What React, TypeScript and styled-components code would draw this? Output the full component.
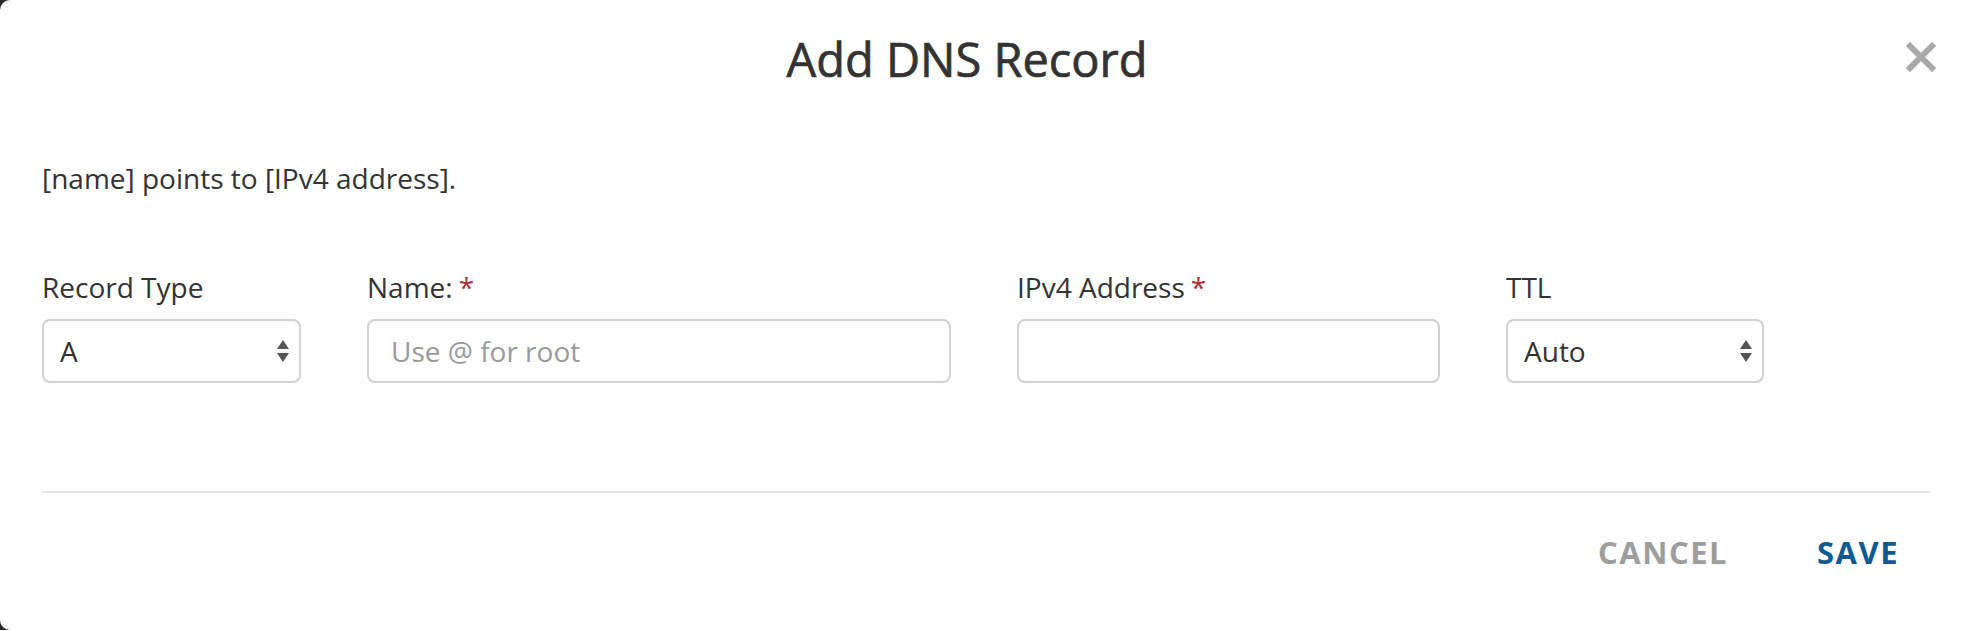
import styled, { createGlobalStyle } from "styled-components";

const GlobalStyle = createGlobalStyle`
  html, body {
    margin: 0;
    padding: 0;
    background: #2a2a2a;
    overflow: hidden;
  }
  body {
    font-family: "Open Sans", "Liberation Sans", sans-serif;
    color: #333;
  }
`;

const Modal = styled.div`
  position: relative;
  box-sizing: border-box;
  width: 1972px;
  height: 630px;
  background: #fff;
  border-radius: 10px;
  padding: 0 42px;
`;

const Header = styled.div`
  display: flex;
  justify-content: center;
  padding: 30px 38px 0 0;
`;

const Title = styled.h1`
  margin: 0;
  font-size: 47px;
  line-height: 58px;
  font-weight: 400;
  color: #333;
  -webkit-text-stroke: 0.7px #333;
`;

const CloseButton = styled.button`
  position: absolute;
  top: 42px;
  right: 36px;
  width: 30px;
  height: 30px;
  padding: 0;
  border: none;
  background: none;
  cursor: pointer;
`;

const Description = styled.p`
  margin: 70px 0 0;
  font-size: 28px;
  line-height: 40px;
`;

const FieldRow = styled.div`
  display: grid;
  grid-template-columns: 259px 584px 423px 258px;
  column-gap: 66px;
  margin-top: 69px;
`;

const Field = styled.div`
  display: flex;
  flex-direction: column;
  gap: 12px;
`;

const Label = styled.label`
  font-size: 28px;
  line-height: 40px;
  color: #333;
`;

const Required = styled.span`
  color: #a83232;
  margin-left: 6px;
`;

const controlBase = `
  box-sizing: border-box;
  width: 100%;
  height: 64px;
  border: 2px solid #d2d2d2;
  border-radius: 8px;
  background: #fff;
  font-family: "Open Sans", "Liberation Sans", sans-serif;
  font-size: 28px;
  color: #333;
  outline: none;
`;

const TextInput = styled.input`
  ${controlBase}
  padding: 0 22px;
  &::placeholder {
    color: #9a9a9a;
  }
`;

const SelectWrap = styled.div`
  position: relative;
`;

const Select = styled.select`
  ${controlBase}
  appearance: none;
  -webkit-appearance: none;
  padding: 0 40px 0 16px;
`;

const Arrows = styled.svg`
  position: absolute;
  right: 12px;
  top: 21px;
  pointer-events: none;
`;

const Divider = styled.hr`
  margin: 108px 0 0;
  border: none;
  border-top: 2px solid #e3e6ea;
`;

const Footer = styled.div`
  display: flex;
  justify-content: flex-end;
  gap: 27px;
  padding-top: 38px;
`;

const ActionButton = styled.button<{ $primary?: boolean }>`
  border: none;
  background: none;
  padding: 0 31px;
  font-family: "Open Sans", "Liberation Sans", sans-serif;
  font-size: 31px;
  line-height: 42px;
  font-weight: 700;
  letter-spacing: 1.5px;
  text-transform: uppercase;
  color: ${({ $primary }) => ($primary ? "#0f5b91" : "#9d9d9d")};
  cursor: pointer;
`;

const SelectArrows = () => (
  <Arrows width="12" height="22" viewBox="0 0 12 22">
    <path d="M6 0 L12 9 L0 9 Z" fill="#555" />
    <path d="M0 13 L12 13 L6 22 Z" fill="#555" />
  </Arrows>
);

export default function App() {
  return (
    <>
      <GlobalStyle />
      <Modal>
        <Header>
          <Title>Add DNS Record</Title>
        </Header>
        <CloseButton aria-label="Close">
          <svg width="30" height="30" viewBox="0 0 30 30">
            <path
              d="M4 4 L26 26 M26 4 L4 26"
              stroke="#a9a9a9"
              strokeWidth="6"
              strokeLinecap="square"
            />
          </svg>
        </CloseButton>

        <Description>[name] points to [IPv4 address].</Description>

        <FieldRow>
          <Field>
            <Label>Record Type</Label>
            <SelectWrap>
              <Select defaultValue="A">
                <option value="A">A</option>
                <option value="AAAA">AAAA</option>
                <option value="CNAME">CNAME</option>
                <option value="MX">MX</option>
                <option value="TXT">TXT</option>
              </Select>
              <SelectArrows />
            </SelectWrap>
          </Field>
          <Field>
            <Label>
              Name:<Required>*</Required>
            </Label>
            <TextInput placeholder="Use @ for root" />
          </Field>
          <Field>
            <Label>
              IPv4 Address<Required>*</Required>
            </Label>
            <TextInput />
          </Field>
          <Field>
            <Label>TTL</Label>
            <SelectWrap>
              <Select defaultValue="auto">
                <option value="auto">Auto</option>
                <option value="300">5 minutes</option>
                <option value="3600">1 hour</option>
              </Select>
              <SelectArrows />
            </SelectWrap>
          </Field>
        </FieldRow>

        <Divider />

        <Footer>
          <ActionButton>Cancel</ActionButton>
          <ActionButton $primary>Save</ActionButton>
        </Footer>
      </Modal>
    </>
  );
}
